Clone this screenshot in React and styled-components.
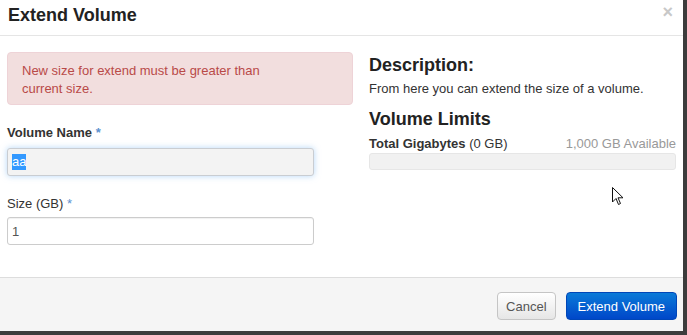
import React from "react";
import styled, { createGlobalStyle } from "styled-components";

const Global = createGlobalStyle`
  html, body { margin: 0; padding: 0; background: #fff; }
  body { font-family: "Liberation Sans", Arial, sans-serif; color: #333; }
`;

// marco oscuro de la captura (sombra derecha e inferior)
const Frame = styled.div`
  width: 687px;
  height: 335px;
  box-sizing: border-box;
  border-right: 4px solid #3c3c3c;
  border-bottom: 4px solid #3c3c3c;
  position: relative;
  overflow: hidden;
`;

const Modal = styled.div`
  height: 100%;
  display: flex;
  flex-direction: column;
  background: #fff;
`;

const Header = styled.div`
  height: 36px;
  box-sizing: border-box;
  border-bottom: 1px solid #e5e5e5;
  display: flex;
  align-items: center;
  justify-content: space-between;
  padding: 0 10px 4px 8px;
`;

const Title = styled.h3`
  margin: 0;
  font-size: 18px;
  font-weight: bold;
  color: #222;
`;

const Close = styled.span`
  font-size: 18px;
  font-weight: bold;
  color: #c8c8c8;
  line-height: 1;
  margin-top: -8px;
`;

const Body = styled.div`
  flex: 1;
  display: grid;
  grid-template-columns: 346px 307px;
  column-gap: 16px;
  padding: 16px 7px 0 7px;
`;

const Column = styled.div`
  display: flex;
  flex-direction: column;
`;

const Alert = styled.div`
  background: #f2dede;
  border: 1px solid #eed3d7;
  border-radius: 4px;
  color: #b94a48;
  font-size: 13px;
  line-height: 18px;
  padding: 9px 60px 8px 14px;
  height: 53px;
  box-sizing: border-box;
`;

const Label = styled.label`
  display: block;
  font-size: 13px;
  font-weight: ${(p) => (p.$bold ? "bold" : "normal")};
  color: #333;
  margin-top: ${(p) => p.$top}px;
  margin-bottom: ${(p) => p.$bottom}px;
`;

const Req = styled.span`
  color: #5b92cf;
`;

const Input = styled.div`
  width: 307px;
  height: 28px;
  box-sizing: border-box;
  border: 1px solid ${(p) => (p.$focus ? "#c9cdd2" : "#cccccc")};
  border-radius: 3px;
  background: ${(p) => (p.$focus ? "#f3f3f3" : "#fff")};
  box-shadow: ${(p) =>
    p.$focus
      ? "0 0 6px rgba(120, 180, 240, 0.55)"
      : "inset 0 1px 1px rgba(0,0,0,0.06)"};
  font-size: 13px;
  color: #555;
  padding: 0 4px;
  display: flex;
  align-items: center;
`;

const Selected = styled.span`
  background: #3399ff;
  color: #fff;
  line-height: 16px;
`;

const H4 = styled.h4`
  margin: ${(p) => p.$top}px 0 0;
  font-size: 18px;
  font-weight: bold;
  color: #222;
  line-height: 20px;
`;

const Text = styled.p`
  margin: 6px 0 0;
  font-size: 13px;
  color: #333;
`;

const Quota = styled.div`
  display: flex;
  justify-content: space-between;
  font-size: 13px;
  margin-top: 7px;
`;

const Muted = styled.span`
  color: #999;
`;

const Bar = styled.div`
  margin-top: 2px;
  height: 15px;
  background: #f1f1f1;
  border: 1px solid #e6e6e6;
  border-radius: 3px;
`;

const Footer = styled.div`
  height: 54px;
  box-sizing: border-box;
  border-top: 1px solid #dddddd;
  background: #f5f5f5;
  display: flex;
  justify-content: flex-end;
  align-items: flex-start;
  gap: 10px;
  padding: 14px 6px 0 0;
`;

const Button = styled.button`
  height: 28px;
  box-sizing: border-box;
  border-radius: 4px;
  font-family: "Liberation Sans", Arial, sans-serif;
  font-size: 13px;
  padding: 0 ${(p) => (p.$primary ? 11 : 8)}px;
  color: ${(p) => (p.$primary ? "#fff" : "#555")};
  border: 1px solid ${(p) => (p.$primary ? "#0046b8" : "#c5c5c5")};
  background: ${(p) =>
    p.$primary
      ? "linear-gradient(#0a7ad8, #0047c9)"
      : "linear-gradient(#ffffff, #e6e6e6)"};
`;

const Cursor = styled.svg`
  position: absolute;
  left: 612px;
  top: 187px;
`;

const App = () => {
  return (
    <Frame>
      <Global />
      <Modal>
        <Header>
          <Title>Extend Volume</Title>
          <Close>×</Close>
        </Header>
        <Body>
          <Column>
            <Alert>New size for extend must be greater than current size.</Alert>
            <Label $bold $top={20} $bottom={8}>
              Volume Name <Req>*</Req>
            </Label>
            <Input $focus>
              <Selected>aa</Selected>
            </Input>
            <Label $top={20} $bottom={6}>
              Size (GB) <Req>*</Req>
            </Label>
            <Input>1</Input>
          </Column>
          <Column>
            <H4 $top={3}>Description:</H4>
            <Text>From here you can extend the size of a volume.</Text>
            <H4 $top={13}>Volume Limits</H4>
            <Quota>
              <span>
                <b>Total Gigabytes</b> (0 GB)
              </span>
              <Muted>1,000 GB Available</Muted>
            </Quota>
            <Bar />
          </Column>
        </Body>
        <Footer>
          <Button>Cancel</Button>
          <Button $primary>Extend Volume</Button>
        </Footer>
      </Modal>
      <Cursor width="12" height="20" viewBox="0 0 12 20">
        <path d="M0.5 0.5 L0.5 15 L4 11.5 L6.5 17.5 L8.5 16.5 L6 10.8 L11 10.8 Z" fill="#fff" stroke="#111" strokeWidth="1" />
      </Cursor>
    </Frame>
  );
};

export default App;
